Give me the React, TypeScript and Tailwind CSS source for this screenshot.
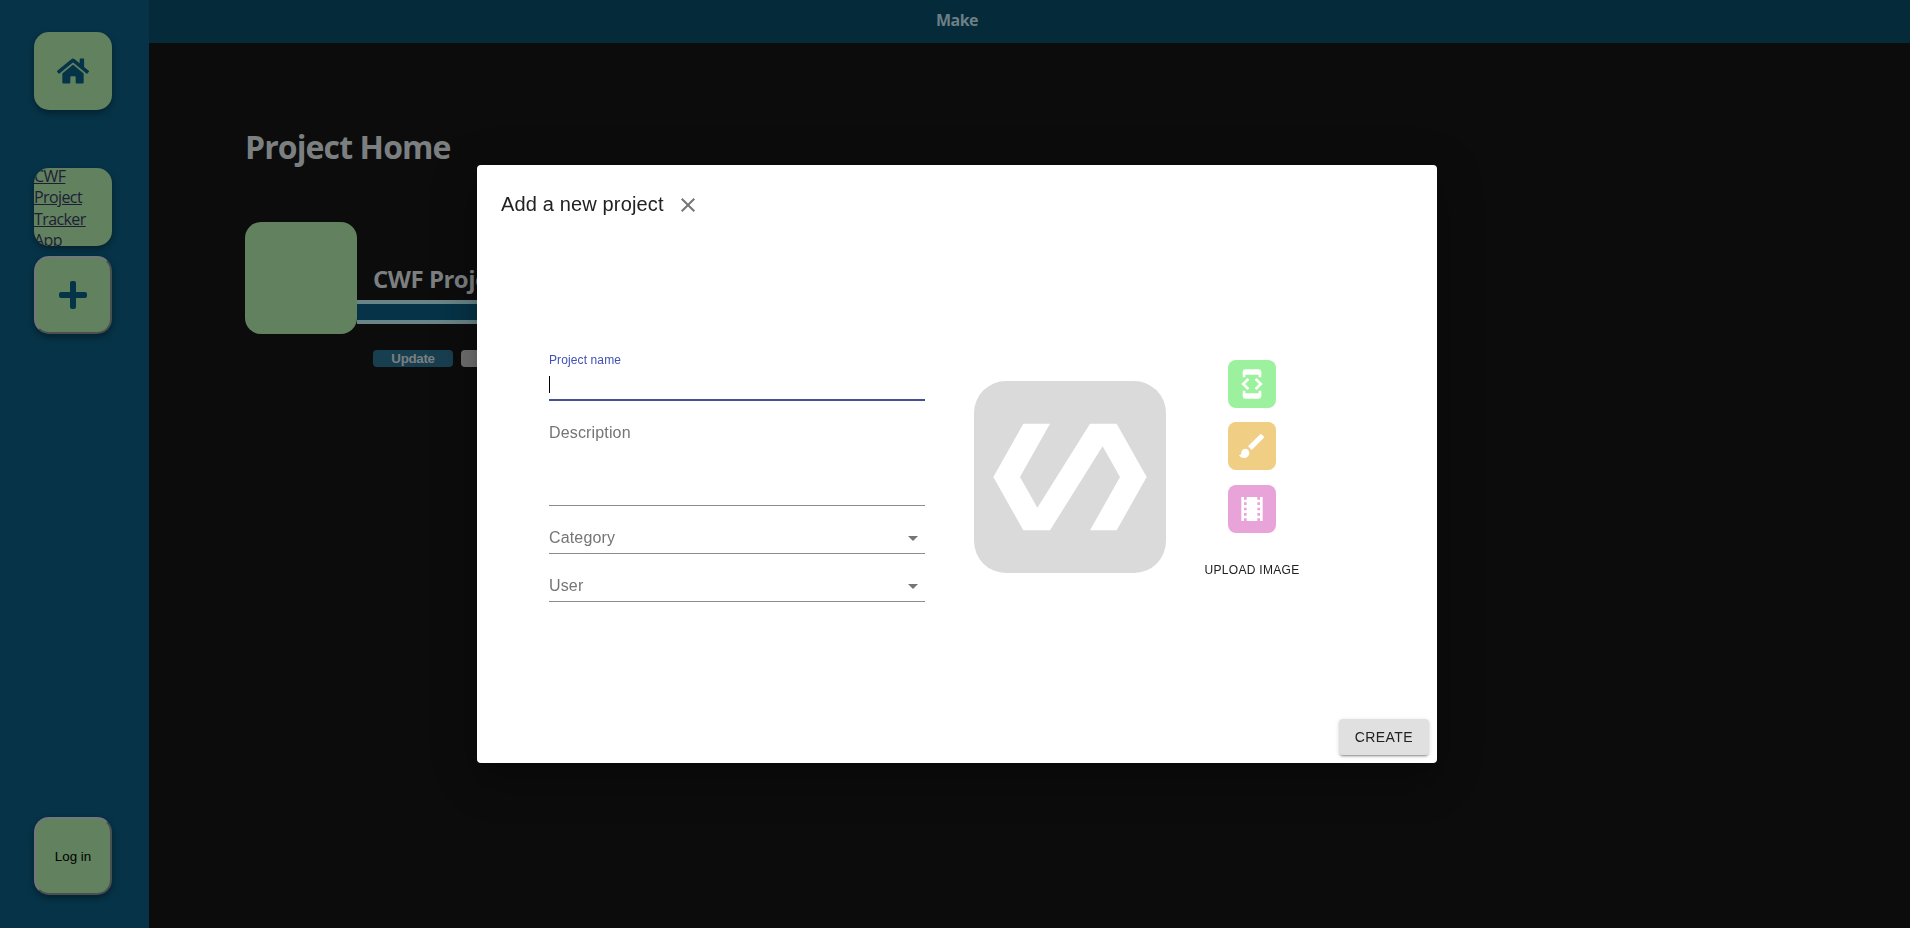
import React from "react";
import { FaHome, FaPlus } from "react-icons/fa";

const Icon = ({ d, className }: { d: string; className: string }) => (
  <svg viewBox="0 0 24 24" fill="currentColor" className={className}>
    <path d={d} />
  </svg>
);

const POLYMER = "M19 4h-4L7.11 16.63 4.5 12 9 4H5L.5 12 5 20h4l7.89-12.63L19.5 12 15 20h4l4.5-8z";
const DEVELOPER =
  "M7 5h10v2h2V3c0-1.1-.9-1.99-2-1.99L7 1c-1.1 0-2 .9-2 2v4h2V5zm8.41 11.59L20 12l-4.59-4.59L14 8.83 17.17 12 14 15.17l1.41 1.42zM10 15.17L6.83 12 10 8.83 8.59 7.41 4 12l4.59 4.59L10 15.17zM17 19H7v-2H5v4c0 1.1.9 2 2 2h10c1.1 0 2-.9 2-2v-4h-2v2z";
const BRUSH =
  "M7 14c-1.66 0-3 1.34-3 3 0 1.31-1.16 2-2 2 .92 1.22 2.49 2 4 2 2.21 0 4-1.79 4-4 0-1.66-1.34-3-3-3zm13.71-9.37l-1.34-1.34a.996.996 0 0 0-1.41 0L9 12.25 11.75 15l8.96-8.96a.996.996 0 0 0 0-1.41z";
const THEATERS =
  "M18 3v2h-2V3H8v2H6V3H4v18h2v-2h2v2h8v-2h2v2h2V3h-2zM8 17H6v-2h2v2zm0-4H6v-2h2v2zm0-4H6V7h2v2zm10 8h-2v-2h2v2zm0-4h-2v-2h2v2zm0-4h-2V7h2v2z";
const CLOSE =
  "M19 6.41L17.59 5 12 10.59 6.41 5 5 6.41 10.59 12 5 17.59 6.41 19 12 13.41 17.59 19 19 17.59 13.41 12z";

const tile =
  "flex size-[78px] shrink-0 overflow-hidden rounded-[15px] bg-[#61815f] shadow-[0_3px_6px_rgba(0,0,0,0.35)]";
const outset =
  "items-center justify-center border-2 border-t-[#727779] border-l-[#727779] border-r-[#4a4f52] border-b-[#4a4f52]";

function Sidebar() {
  return (
    <nav className="flex w-[149px] shrink-0 flex-col bg-[#063347] pt-8 pb-[33px] pl-[34px]">
      <a className={`${tile} items-center justify-center`}>
        <FaHome className="size-8 text-[#053448]" />
      </a>
      <a className={`${tile} mt-[58px]`}>
        <span className="-mt-[2px] block w-[60px] font-['Open_Sans','Noto_Sans',sans-serif] text-base leading-[21.3px] tracking-[-0.6px] text-[#201e36] underline">
          CWF Project Tracker App
        </span>
      </a>
      <button className={`${tile} ${outset} mt-[10px]`}>
        <FaPlus className="size-8 text-[#053448]" />
      </button>
      <button
        className={`${tile} ${outset} mt-auto pt-px font-['Liberation_Sans',Arial,sans-serif] text-[13.33px] text-black`}
      >
        Log in
      </button>
    </nav>
  );
}

function ProjectHome() {
  return (
    <main className="flex flex-col pt-[80px] pl-[96px] font-['Open_Sans','Noto_Sans',sans-serif] font-bold text-[#7b7f80]">
      <h1 className="text-[32px] leading-[48px] tracking-[-0.9px] whitespace-nowrap">Project Home</h1>
      <div className="mt-[51px] flex">
        <div className="size-28 shrink-0 rounded-2xl bg-[#61815f]" />
        <div className="flex flex-1 flex-col">
          <h2 className="mt-[38px] mb-[2px] pl-4 text-2xl leading-[38px] tracking-[-0.5px] whitespace-nowrap">
            CWF Project Tracker App
          </h2>
          <div className="h-6 w-[700px] border-y-4 border-[#6a8587] bg-[#063347]" />
          <div className="mt-[26px] flex gap-2 pl-4 font-['Liberation_Sans',Arial,sans-serif] text-[13.33px] leading-[17px] tracking-[-0.3px]">
            <button className="h-[17px] w-20 rounded bg-[#183f50]">Update</button>
            <button className="h-[17px] w-20 rounded bg-[#707070] text-[#222]">Delete</button>
          </div>
        </div>
      </div>
    </main>
  );
}

function SelectField({ label }: { label: string }) {
  return (
    <div className="flex h-12 items-end justify-between border-b border-[#8c8c8c] pb-[3px] text-base text-[#757575]">
      <span className="leading-6 tracking-[0.15px]">{label}</span>
      <Icon d="M7 10l5 5 5-5z" className="size-6" />
    </div>
  );
}

function ProjectDialog() {
  return (
    <div className="fixed inset-0 flex items-center justify-center pl-1 font-['Liberation_Sans',Arial,sans-serif]">
      <section className="flex h-[598px] w-[960px] flex-col rounded bg-white shadow-[0_11px_15px_-7px_rgba(0,0,0,0.2),0_24px_38px_3px_rgba(0,0,0,0.14),0_9px_46px_8px_rgba(0,0,0,0.12)]">
        <header className="flex items-center pt-6 pl-6 text-[#212121]">
          <h2 className="pb-[2px] text-xl leading-[30px] tracking-[0.15px]">Add a new project</h2>
          <Icon d={CLOSE} className="ml-3 size-6 text-[#757575]" />
        </header>
        <div className="flex flex-1 pl-[72px]">
          <div className="flex w-[376px] flex-col pt-[131px]">
            <label className="text-xs leading-4 tracking-[0.11px] text-[#3f51b5]">Project name</label>
            <div className="flex h-[33px] items-start border-b-2 border-[#4a5098] pt-[8px]">
              <span className="h-[17px] w-px bg-black" />
            </div>
            <div className="flex h-[105px] flex-col border-b border-[#8c8c8c] pt-[20px] text-base leading-6 tracking-[0.15px] text-[#757575]">
              Description
            </div>
            <SelectField label="Category" />
            <SelectField label="User" />
          </div>
          <div className="mt-[160px] ml-[49px] flex size-48 items-center justify-center rounded-[32px] bg-[#dadada]">
            <Icon d={POLYMER} className="size-40 text-white" />
          </div>
          <div className="mt-[139px] ml-[34px] flex w-[104px] flex-col items-center text-white">
            <button className="flex size-12 items-center justify-center rounded-lg bg-[#9bf19d]">
              <Icon d={DEVELOPER} className="size-8" />
            </button>
            <button className="mt-[14px] flex size-12 items-center justify-center rounded-lg bg-[#f0ce83]">
              <Icon d={BRUSH} className="size-8" />
            </button>
            <button className="mt-[15px] flex size-12 items-center justify-center rounded-lg bg-[#e8a4d9]">
              <Icon d={THEATERS} className="size-8" />
            </button>
            <button className="mt-[26px] text-xs leading-[22px] tracking-[0.3px] whitespace-nowrap text-[#212121]">
              UPLOAD IMAGE
            </button>
          </div>
        </div>
        <footer className="flex justify-end p-2">
          <button className="h-9 rounded bg-[#e0e0e0] px-4 text-sm tracking-[0.4px] text-[#212121] shadow-[0_3px_1px_-2px_rgba(0,0,0,0.2),0_2px_2px_rgba(0,0,0,0.14),0_1px_5px_rgba(0,0,0,0.12)]">
            CREATE
          </button>
        </footer>
      </section>
    </div>
  );
}

export default function App() {
  return (
    <div className="flex h-[928px] w-full overflow-hidden bg-[#0c0c0d]">
      <Sidebar />
      <div className="flex min-w-0 flex-1 flex-col">
        <header className="flex h-[43px] items-center bg-[#052b3b] pr-[145px] pb-[3px] font-['Open_Sans','Noto_Sans',sans-serif] text-base font-bold tracking-[-0.5px] text-[#6d7f85]">
          <span className="flex-1 text-center">Make</span>
        </header>
        <ProjectHome />
      </div>
      <ProjectDialog />
    </div>
  );
}
